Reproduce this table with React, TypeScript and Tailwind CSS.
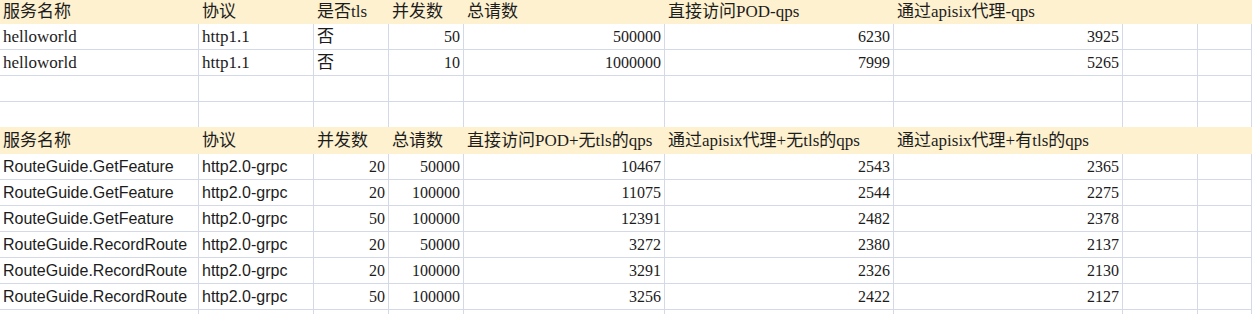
const widths = [
  "w-[199px]",
  "w-[115px]",
  "w-[75px]",
  "w-[75px]",
  "w-[201px]",
  "w-[229px]",
  "w-[229px]",
  "w-[75px]",
  "flex-1",
];

const serif = "font-['Liberation_Serif','Noto_Sans_CJK_SC',serif] text-[17px]";
const num = "font-['Liberation_Serif',serif] text-[16px]";
const sans = "font-['Liberation_Sans','Noto_Sans_CJK_SC',sans-serif] text-[16px]";

type Cell = { v: string; kind?: "text" | "num" | "sans" };

function HeaderRow({ labels, h }: { labels: string[]; h: string }) {
  return (
    <div className={`flex ${h} bg-[#fdf1d0]`}>
      {widths.map((w, i) => (
        <div key={i} className={`${w} shrink-0 flex items-center pl-[3px] whitespace-nowrap ${serif}`}>
          {labels[i] ?? ""}
        </div>
      ))}
    </div>
  );
}

function DataRow({ cells, h, last }: { cells: Cell[]; h: string; last?: boolean }) {
  return (
    <div className={`flex ${h}`}>
      {widths.map((w, i) => {
        const c = cells[i];
        const font = c?.kind === "num" ? num : c?.kind === "sans" ? sans : serif;
        return (
          <div
            key={i}
            className={`${w} shrink-0 flex items-center whitespace-nowrap border-r border-[#d3d9e6] ${
              last ? "" : "border-b"
            } ${c?.kind === "num" ? "justify-end pr-[3px]" : "pl-[3px]"} ${font}`}
          >
            {c?.v ?? ""}
          </div>
        );
      })}
    </div>
  );
}

const t1 = [
  ["helloworld", "http1.1", "否", "50", "500000", "6230", "3925"],
  ["helloworld", "http1.1", "否", "10", "1000000", "7999", "5265"],
];

const t2 = [
  ["RouteGuide.GetFeature", "http2.0-grpc", "20", "50000", "10467", "2543", "2365"],
  ["RouteGuide.GetFeature", "http2.0-grpc", "20", "100000", "11075", "2544", "2275"],
  ["RouteGuide.GetFeature", "http2.0-grpc", "50", "100000", "12391", "2482", "2378"],
  ["RouteGuide.RecordRoute", "http2.0-grpc", "20", "50000", "3272", "2380", "2137"],
  ["RouteGuide.RecordRoute", "http2.0-grpc", "20", "100000", "3291", "2326", "2130"],
  ["RouteGuide.RecordRoute", "http2.0-grpc", "50", "100000", "3256", "2422", "2127"],
];

export default function App() {
  return (
    <div className="w-[1252px] h-[314px] overflow-hidden bg-white text-[#1c1c1c]">
      <HeaderRow
        h="h-[24px]"
        labels={["服务名称", "协议", "是否tls", "并发数", "总请数", "直接访问POD-qps", "通过apisix代理-qps"]}
      />
      {t1.map((r, i) => (
        <DataRow
          key={i}
          h="h-[26px]"
          cells={r.map((v, j) => ({ v, kind: j >= 3 ? "num" : "text" }))}
        />
      ))}
      <DataRow h="h-[26px]" cells={[]} />
      <DataRow h="h-[25px]" cells={[]} last />
      <HeaderRow
        h="h-[27px]"
        labels={[
          "服务名称",
          "协议",
          "并发数",
          "总请数",
          "直接访问POD+无tls的qps",
          "通过apisix代理+无tls的qps",
          "通过apisix代理+有tls的qps",
        ]}
      />
      {t2.map((r, i) => (
        <DataRow
          key={i}
          h="h-[26px]"
          cells={r.map((v, j) => ({ v, kind: j >= 2 ? "num" : "sans" }))}
        />
      ))}
      <DataRow h="h-[26px]" cells={[]} last />
    </div>
  );
}
